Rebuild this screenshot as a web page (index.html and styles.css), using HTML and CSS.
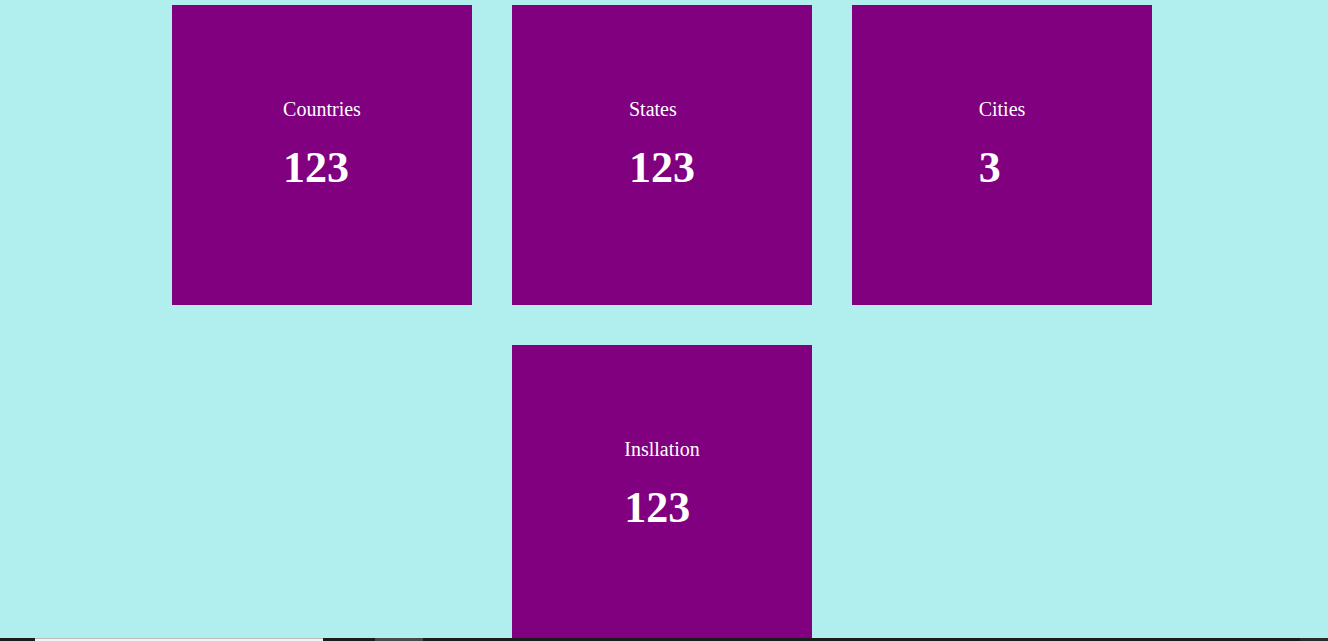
FILE: index.html
```html
<!DOCTYPE html>
<html>
<head>
<meta charset="utf-8">
<link rel="stylesheet" href="styles.css">
</head>
<body>
<div class="page">
  <div class="grid">
    <div class="card"><div class="inner"><div class="label">Countries</div><div class="num">123</div></div></div>
    <div class="card"><div class="inner"><div class="label">States</div><div class="num">123</div></div></div>
    <div class="card"><div class="inner"><div class="label">Cities</div><div class="num">3</div></div></div>
    <div class="card"><div class="inner"><div class="label">Insllation</div><div class="num">123</div></div></div>
  </div>
</div>
<div class="taskbar">
  <div class="tb-dark tb-a"></div>
  <div class="tb-light"></div>
  <div class="tb-dark tb-b"></div>
  <div class="tb-gray"></div>
  <div class="tb-dark tb-c"></div>
  <div class="tb-end"></div>
</div>
</body>
</html>
```
FILE: styles.css
```css
html, body {
  margin: 0;
  padding: 0;
  overflow: hidden;
  height: 100%;
}
body {
  background: #b1eeee;
  font-family: "Liberation Serif", "Times New Roman", serif;
  color: #fff;
}
.page {
  padding: 5px 4px 0 0;
}
.grid {
  width: 980px;
  margin: 0 auto;
  display: flex;
  flex-wrap: wrap;
  justify-content: center;
  gap: 40px;
}
.card {
  width: 300px;
  height: 300px;
  background: #800080;
  display: flex;
  justify-content: center;
  align-items: flex-start;
}
.inner {
  margin-top: 93px;
  display: flex;
  flex-direction: column;
  align-items: flex-start;
}
.label {
  font-size: 20px;
  line-height: 23px;
}
.num {
  font-size: 44px;
  font-weight: bold;
  line-height: 53px;
  margin-top: 20px;
}
.taskbar {
  position: fixed;
  left: 0;
  right: 0;
  bottom: 0;
  height: 3px;
  display: flex;
}
.tb-dark { background: #1c1c1c; }
.tb-a { width: 35px; }
.tb-light { width: 288px; background: #f2f2f2; border-top: 1px solid #bdbdbd; }
.tb-b { width: 52px; }
.tb-gray { width: 48px; background: #4a4a4a; }
.tb-c { flex: 1; }
.tb-end { width: 28px; background: #2a2a2a; }
```
